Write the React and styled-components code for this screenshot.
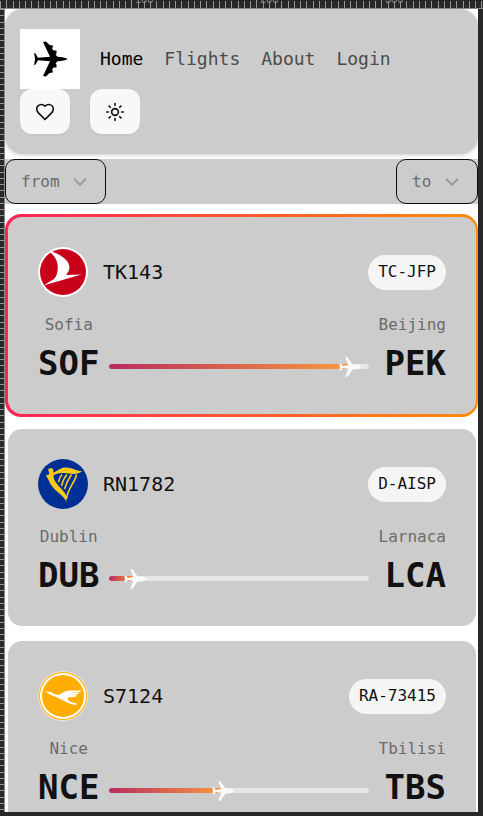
import React from "react";
import styled, { createGlobalStyle } from "styled-components";
import { ChevronDown, Sun } from "lucide-react";

const GlobalStyle = createGlobalStyle`
  *, *::before, *::after { box-sizing: border-box; }
  body {
    margin: 0;
    background: #282828;
    color: #111111;
    font: 16px/24px "Consolas", "DejaVu Sans Mono", monospace;
  }
  button, select { font: inherit; color: inherit; }
  svg { display: block; }
`;

const Frame = styled.div`
  display: grid;
  grid-template: 9px minmax(0, 1fr) 4px / 5px minmax(0, 1fr) 5px;
  height: 100vh;
  overflow: hidden;
`;

const TopRulerBox = styled.div`
  grid-column: 1 / -1;
  overflow: hidden;
  border-bottom: 1px solid #8a8a8a;
`;

const SideRulerBox = styled.div`
  overflow: hidden;
  border-right: 1px solid #8a8a8a;
`;

const Viewport = styled.div`
  overflow: hidden;
  background: #ffffff;
`;

const Header = styled.header`
  display: flex;
  flex-wrap: wrap;
  align-items: center;
  column-gap: 20px;
  padding: 20px 15px;
  border-radius: 18px;
  background: #cccccc;
  box-shadow: 0 1px 4px rgba(0, 0, 0, 0.2);
`;

const Logo = styled.a`
  width: 60px;
  height: 60px;
  background: #ffffff;
`;

const Nav = styled.nav`
  display: flex;
  gap: 21px;
`;

const NavLink = styled.a`
  font-size: 18px;
  text-decoration: none;
  color: ${(p) => (p.$active ? "#000000" : "#4b4b4b")};
`;

const Actions = styled.div`
  display: flex;
  gap: 20px;
`;

const IconButton = styled.button`
  display: grid;
  place-items: center;
  width: 50px;
  height: 45px;
  padding: 0;
  border: 0;
  border-radius: 12px;
  background: #f8f8f8;
  box-shadow: 0 1px 2px rgba(0, 0, 0, 0.06);
`;

const Filters = styled.div`
  display: flex;
  justify-content: space-between;
  margin: 5px 0 10px;
  background: #cccccc;
`;

const Filter = styled.label`
  display: flex;
  align-items: center;
  gap: 9px;
  height: 45px;
  padding: 0 14px 0 15px;
  border: 1px solid #05100c;
  border-radius: 10px;
  color: #999999;
`;

const Select = styled.select`
  appearance: none;
  padding: 0;
  border: 0;
  background: transparent;
  color: #6b6b6b;
`;

const FlightList = styled.main`
  display: grid;
  gap: 9px;
`;

const CardFrame = styled.div`
  padding: 3px 2px 3px 3px;
  border-radius: 16px;
  background: ${(p) => (p.$selected ? "linear-gradient(90deg, #ff2457, #ff8c0a)" : "transparent")};
`;

const Card = styled.article`
  display: grid;
  gap: 16px;
  padding: 30px 30px 25px;
  border-radius: 14px;
  background: #cccccc;
`;

const CardTop = styled.div`
  display: flex;
  align-items: center;
  gap: 15px;
`;

const FlightNumber = styled.h2`
  flex: 1;
  margin: 0;
  font-size: 20px;
  font-weight: 400;
`;

const Badge = styled.span`
  display: flex;
  align-items: center;
  height: 35px;
  padding: 0 10px;
  border-radius: 18px;
  background: #f5f5f5;
`;

const Route = styled.div`
  display: flex;
  align-items: flex-end;
  gap: 10px;
`;

const Place = styled.div`
  text-align: ${(p) => p.$align};
`;

const City = styled.div`
  color: #6b6b6b;
`;

const Code = styled.div`
  font-size: 34px;
  line-height: 52px;
  font-weight: 700;
`;

const Track = styled.div`
  position: relative;
  flex: 1;
  height: 5px;
  margin-bottom: 20px;
  border-radius: 3px;
  background: #e5e6ea;
`;

const Fill = styled.div`
  height: 100%;
  border-radius: 3px;
  background: linear-gradient(90deg, #b72d60, #fb983c);
`;

const PlaneMarker = styled.svg`
  position: absolute;
  top: 50%;
  transform: translate(-50%, -50%);
`;

function TopRuler() {
  return (
    <TopRulerBox>
      <svg width="2000" height="8" shapeRendering="crispEdges" aria-hidden="true">
        {Array.from({ length: 320 }, (_, i) => (
          <rect key={i} x={Math.round(i * 6.25)} y={i % 20 === 1 ? 0 : 1} width="1" height="8" fill="#969696" />
        ))}
        {[100, 200, 300].map((n) => (
          <text key={n} x={n * 1.25 + 10} y="3" fontSize="11" fill="#8a8a8a" fontFamily="Liberation Sans, sans-serif">{n}</text>
        ))}
      </svg>
    </TopRulerBox>
  );
}

function SideRuler() {
  return (
    <SideRulerBox>
      <svg width="4" height="3000" shapeRendering="crispEdges" aria-hidden="true">
        {Array.from({ length: 480 }, (_, i) => (
          <rect key={i} x="0" y={Math.round(i * 6.25)} width="4" height="1" fill="#969696" />
        ))}
      </svg>
    </SideRulerBox>
  );
}

function LogoPlane() {
  return (
    <svg width="60" height="60" viewBox="0 0 60 60" aria-hidden="true">
      <path d="M47.5 30C46 28.600 42 28 37.500 27.700L35.500 25.500 36.500 24.500V21.500H33.500L31.800 19 32.800 18.500V16.500L29.500 16 26 12.500 23 13 30 27.800 18 28.700 15.500 24.500 14 24 15 29.300V30.700L14 36 15.500 35.500 18 31.300 30 32.200 23 47 26 47.500 29.500 44 32.800 43.500V41.500L31.800 41 33.500 38.500H36.500V35.500L35.500 34.500 37.500 32.300C42 32 46 31.400 47.500 30Z" fill="#000" />
    </svg>
  );
}

function HeartIcon() {
  return (
    <svg width="20" height="20" viewBox="0 0 24 24" fill="none" stroke="currentColor" strokeWidth="2" strokeLinecap="round" strokeLinejoin="round" aria-hidden="true">
      <path d="M19 14c1.490-1.460 3-3.210 3-5.500A5.500 5.500 0 0 0 16.500 3c-1.760 0-3 .5-4.500 2-1.500-1.500-2.740-2-4.500-2A5.500 5.500 0 0 0 2 8.500c0 2.300 1.500 4.050 3 5.500l7 7Z" />
    </svg>
  );
}

function TurkishLogo() {
  return (
    <svg width="50" height="50" viewBox="0 0 50 50" aria-hidden="true">
      <circle cx="25" cy="25" r="25" fill="#fff" />
      <circle cx="25" cy="25" r="23" fill="#c80019" />
      <path d="M14 4.500C23 8 31 13 31.500 20 31.500 23 30 25.500 28 28L43.500 27.500 5.500 38.500 16 32C20 28 20 21 19.500 17 18.500 12 16 8 12 5.500Z" fill="#fff" />
    </svg>
  );
}

function RyanairLogo() {
  return (
    <svg width="50" height="50" viewBox="0 0 50 50" aria-hidden="true">
      <circle cx="25" cy="25" r="25" fill="#003095" />
      <path d="M10 10L14 9 15.500 11 15 13.500C19 13 21 9 27 8.500 33 8 38 12 44 12 40 16.500 32 14.500 26 14 20 14 15 15 15.500 18 16 24 26 31 28 36L28.500 43C25 35 17 33 12.500 25L10 20 8 16.500 11.500 15Z" fill="#f8cb18" />
      <path d="M24 15.500Q21.500 18 20.500 23M29 15.500Q25 20 23.500 27M33.500 15.500Q29 22 26.500 30M38.500 15.500C37 24 29.500 29 28.500 40" fill="none" stroke="#f8cb18" strokeWidth="1.600" />
    </svg>
  );
}

function LufthansaLogo() {
  return (
    <svg width="50" height="50" viewBox="0 0 50 50" aria-hidden="true">
      <circle cx="25" cy="25" r="25" fill="#f3e6c8" />
      <circle cx="25" cy="25" r="24" fill="#ffad00" />
      <circle cx="25" cy="25" r="22" fill="none" stroke="#fff" strokeWidth="2" />
      <path d="M7 20.500C11 20.500 14 21 16 23 18 24 22 24.500 25 21.500 28 19 34 19.500 43.500 19.500L41.500 21.300 33 21.800 41 21.900 39.500 23.500 33 24 39 24.200 37 26 30 26.400C29 28 30 29.500 33 31L39 32.500 38 34C30 33 25 29 18 26 13 24.500 11 22.500 7 20.500Z" fill="#fff" />
    </svg>
  );
}

function Progress({ value }) {
  return (
    <Track role="progressbar" aria-label="Flight progress" aria-valuenow={value} aria-valuemin={0} aria-valuemax={100}>
      <Fill style={{ width: `${value}%` }} />
      <PlaneMarker style={{ left: `${value}%` }} width="22" height="20" viewBox="0 0 22 20" aria-hidden="true">
        <path d="M22 10c0-1.500-2.500-2.300-5-2.500h-3.500L8.500.2H6.200L9.300 8 3.800 9 2.500 6.800H.3L1 10l-.7 3.200h2.200L3.800 11l5.500 1-3.100 7.800h2.300l5-7.300H17c2.500-.2 5-1 5-2.500z" fill="#fafafa" />
      </PlaneMarker>
    </Track>
  );
}

const flights = [
  { number: "TK143", plate: "TC-JFP", from: ["Sofia", "SOF"], to: ["Beijing", "PEK"], progress: 93, Brand: TurkishLogo, selected: true },
  { number: "RN1782", plate: "D-AISP", from: ["Dublin", "DUB"], to: ["Larnaca", "LCA"], progress: 10, Brand: RyanairLogo },
  { number: "S7124", plate: "RA-73415", from: ["Nice", "NCE"], to: ["Tbilisi", "TBS"], progress: 44, Brand: LufthansaLogo },
];

function FlightCard({ flight }) {
  const { number, plate, from, to, progress, Brand, selected } = flight;
  return (
    <CardFrame $selected={selected}>
      <Card>
        <CardTop>
          <Brand />
          <FlightNumber>{number}</FlightNumber>
          <Badge>{plate}</Badge>
        </CardTop>
        <Route>
          <Place $align="center">
            <City>{from[0]}</City>
            <Code>{from[1]}</Code>
          </Place>
          <Progress value={progress} />
          <Place $align="right">
            <City>{to[0]}</City>
            <Code>{to[1]}</Code>
          </Place>
        </Route>
      </Card>
    </CardFrame>
  );
}

function FilterSelect({ name }) {
  return (
    <Filter>
      <Select aria-label={name} defaultValue="">
        <option value="">{name}</option>
      </Select>
      <ChevronDown size={22} strokeWidth={2} aria-hidden="true" />
    </Filter>
  );
}

export default function App() {
  return (
    <>
      <GlobalStyle />
      <Frame>
        <TopRuler />
        <SideRuler />
        <Viewport>
          <Header>
            <Logo href="#" aria-label="Home page"><LogoPlane /></Logo>
            <Nav>
              <NavLink href="#" $active>Home</NavLink>
              <NavLink href="#">Flights</NavLink>
              <NavLink href="#">About</NavLink>
              <NavLink href="#">Login</NavLink>
            </Nav>
            <Actions>
              <IconButton type="button" aria-label="Favorites"><HeartIcon /></IconButton>
              <IconButton type="button" aria-label="Toggle theme"><Sun size={20} /></IconButton>
            </Actions>
          </Header>
          <Filters>
            <FilterSelect name="from" />
            <FilterSelect name="to" />
          </Filters>
          <FlightList>
            {flights.map((f) => <FlightCard key={f.number} flight={f} />)}
          </FlightList>
        </Viewport>
      </Frame>
    </>
  );
}
